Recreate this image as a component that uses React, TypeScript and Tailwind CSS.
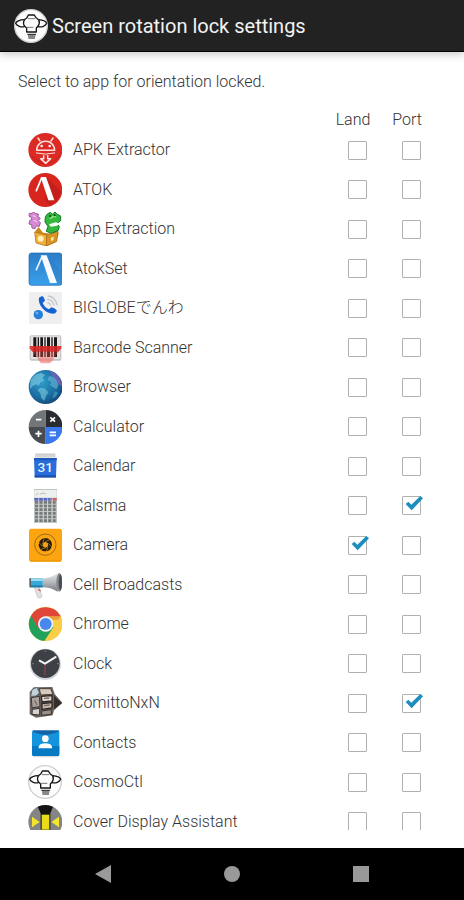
import React, { useState } from 'react';

type Orientation = 'land' | 'port';

interface AppEntry {
  name: string;
  icon: React.ReactNode;
  land?: boolean;
  port?: boolean;
}

// all launcher icons share one 102 unit canvas
const Icon: React.FC<{ children: React.ReactNode }> = ({ children }) => (
  <svg viewBox="0 0 102 102" className="block size-[34px]" aria-hidden="true">
    {children}
  </svg>
);

const CosmoIcon: React.FC = () => (
  <Icon>
    <circle cx="51" cy="51" r="49" fill="#fcfcfc" stroke="#d0d0d0" strokeWidth="4" />
    <g fill="none" stroke="#151515" strokeWidth="4" strokeLinejoin="round">
      <path d="M31 32 L39 26 L43 18 H61 L66 26 L74 32" />
      <path d="M31 32 C17 32 6 38 5 43 C8 50 22 57 32 52" />
      <path d="M74 32 C87 33 96 38 98 43 C95 50 83 57 71 52" />
      <path d="M32 32 Q25 42 32 52 L38 57 V69 H67 V57 L72 52 Q79 42 74 32" />
      <path d="M42 29 H63 M38 55 H58" stroke="#777" strokeWidth="3" />
      <path d="M40 76 H66 M42 81 H64 M43 87 H63" strokeWidth="3" />
    </g>
  </Icon>
);

const ApkExtractorIcon = (
  <Icon>
    <circle cx="52" cy="51" r="51" fill="#dc2b25" />
    <path d="M5 63 A51 51 0 0 0 99 63 L80 82 L52 92 Z" fill="#bf201d" opacity=".5" />
    <g fill="none" stroke="#ffe1df" strokeWidth="4.5" strokeLinecap="round" strokeLinejoin="round">
      <path d="M26 52 C27 16 79 16 80 52 Z" />
      <path d="M36 24 L30 15 M69 24 L75 15" />
      <path d="M25 60 Q52 67 80 60" strokeWidth="3" />
      <path d="M47 68 V77 H38 L53 91 L68 77 H59 V68" />
    </g>
    <circle cx="41" cy="39" r="4" fill="#ffe9e8" />
    <circle cx="65" cy="39" r="4" fill="#ffe9e8" />
  </Icon>
);

const AtokIcon = (
  <Icon>
    <circle cx="52" cy="51" r="51" fill="#d8261f" />
    <path d="M56 14 L98 54 Q94 84 66 97 L50 82 Z" fill="#b71b17" opacity=".6" />
    <path d="M38 12 L54 12 L79 82 L61 82 Z" fill="#fff" />
    <path d="M40 17 L25 53" stroke="#fff" strokeWidth="5" strokeLinecap="round" />
  </Icon>
);

const AppExtractionIcon = (
  <Icon>
    <path d="M4 4 H12 L17 0 L23 5 L31 6 L30 15 L37 19 L31 26 L37 32 L34 43 L25 42 L21 50 L12 48 L11 38 L3 36 L5 26 L12 22 L9 15 L3 13 Z" fill="#d58ad3" stroke="#9e5aa0" strokeWidth="3" />
    <path d="M14 11 L24 14 M17 26 L28 29" stroke="#f0bdf0" strokeWidth="4" />
    <path d="M22 57 L32 45 L45 62 L75 66 L87 49 L92 65 L85 90 L57 102 L24 91 Z" fill="#c8871f" />
    <path d="M20 60 L56 69 L55 102 L24 93 Z" fill="#efaf3a" stroke="#a76a14" strokeWidth="2" />
    <path d="M56 69 L90 58 L86 88 L55 102 Z" fill="#d99626" stroke="#a76a14" strokeWidth="2" />
    <path d="M58 6 L67 1 L73 7 L81 0 L88 7 L98 12 L98 26 L86 35 L94 43 L91 55 L70 64 L55 58 L60 43 L51 30 L52 15 Z" fill="#32b83e" stroke="#187a26" strokeWidth="3" />
    <path d="M63 37 L83 31 L94 34 L88 41 L68 44 Z" fill="#f6fff4" />
    <path d="M65 20 L77 13 L84 15" stroke="#8de981" strokeWidth="4" fill="none" />
    <circle cx="66" cy="12" r="3" fill="#0e4216" />
    <circle cx="80" cy="10" r="3" fill="#0e4216" />
    <circle cx="38" cy="80" r="9" fill="#fff0b5" />
    <path d="M69 77 L77 74 L76 84 L69 87 Z" fill="#fff0b5" />
  </Icon>
);

const AtokSetIcon = (
  <Icon>
    <defs>
      <linearGradient id="atok-set" x1="0" y1="0" x2="0" y2="1">
        <stop offset="0" stopColor="#2b7cc8" />
        <stop offset="1" stopColor="#3aa0ea" />
      </linearGradient>
    </defs>
    <rect x="3" y="3" width="99" height="97" rx="8" fill="url(#atok-set)" stroke="#1d66ad" strokeWidth="2" />
    <path d="M56 12 L100 55 V95 H86 Z" fill="#2a76bb" opacity=".35" />
    <path d="M38 10 L56 10 L87 93 L66 93 Z" fill="#f7fbff" />
    <path d="M41 16 L25 53" stroke="#e4f1fd" strokeWidth="5" strokeLinecap="round" />
  </Icon>
);

const BiglobeIcon = (
  <Icon>
    <rect x="3" y="3" width="99" height="96" rx="4" fill="#efefef" />
    <path d="M33 20 L42 15 Q47 16 51 29 L44 36 Q50 50 63 55 L70 49 Q82 52 87 59 L82 67 Q64 72 46 55 Q29 36 33 20 Z" fill="#1463d2" />
    <g fill="none" stroke="#c3c7cb" strokeWidth="4">
      <path d="M58 35 Q66 36 68 44" />
      <path d="M58 25 Q74 26 78 43" />
      <path d="M59 15 Q82 17 87 42" />
    </g>
    <circle cx="31" cy="71" r="14" fill="#2680d7" />
    <circle cx="27" cy="66" r="4" fill="#6eb5f1" />
  </Icon>
);

const BarcodeIcon = (
  <Icon>
    <rect x="5" y="13" width="95" height="76" rx="5" fill="#c6c6c6" />
    <rect x="9" y="16" width="87" height="68" fill="#e4e4e4" />
    <path d="M16 19 h9 v59 h-9z M29 19 h4 v59 h-4z M37 19 h8 v59 h-8z M49 19 h4 v59 h-4z M57 19 h9 v59 h-9z M70 19 h4 v59 h-4z M78 19 h9 v59 h-9z" fill="#1b1717" />
    <path d="M5 45 H100 V52 L92 62 H13 L5 52 Z" fill="#dc2523" opacity=".88" />
    <path d="M13 62 H92 Q79 78 72 92 H34 Q27 78 13 62 Z" fill="#ec4e47" opacity=".38" />
    <path d="M32 82 H74 L67 97 H38 Z" fill="#ef8c87" opacity=".7" />
  </Icon>
);

const BrowserIcon = (
  <Icon>
    <defs>
      <radialGradient id="globe" cx=".38" cy=".35" r=".7">
        <stop offset="0" stopColor="#2e9ecb" />
        <stop offset=".7" stopColor="#1a699e" />
        <stop offset="1" stopColor="#164776" />
      </radialGradient>
    </defs>
    <circle cx="53" cy="51" r="51" fill="url(#globe)" />
    <path d="M62 1 Q96 8 103 48 L88 42 L75 20 Z" fill="#7862b5" opacity=".8" />
    <path d="M8 30 L22 14 L39 8 L51 15 L43 24 L49 32 L37 37 L32 48 L26 43 L15 47 L6 57 Z" fill="#80c9de" opacity=".65" />
    <path d="M36 53 L50 55 L61 67 L54 77 L49 93 L40 84 L37 70 L29 61 Z" fill="#75c3d9" opacity=".65" />
    <path d="M63 18 L77 21 L87 33 L91 47 L85 58 L75 51 L66 45 L70 36 L59 30 Z" fill="#66b2d1" opacity=".65" />
    <path d="M80 64 L91 68 L82 82 L73 85 Z" fill="#3fa0be" opacity=".7" />
  </Icon>
);

const CalculatorIcon = (
  <Icon>
    <path d="M53 51 V0 A51 51 0 0 0 2 51 Z" fill="#727679" />
    <path d="M53 51 V0 A51 51 0 0 1 104 51 Z" fill="#292d31" />
    <path d="M53 51 V102 A51 51 0 0 1 2 51 Z" fill="#484c50" />
    <path d="M53 51 V102 A51 51 0 0 0 104 51 Z" fill="#3979ed" />
    <g stroke="#fff" strokeWidth="5" fill="none">
      <path d="M24 29 H40 M67 22 L81 35 M81 22 L67 35 M22 71 H41 M31.500 62 V81 M65 67 H84 M65 76 H84" />
    </g>
  </Icon>
);

const CalendarIcon = (
  <Icon>
    <rect x="21" y="13" width="62" height="18" rx="3" fill="#e3e3e3" />
    <path d="M22 21 H82 M24 16 H80" stroke="#bdbdbd" strokeWidth="2" />
    <path d="M18 27 H86 L84 84 H20 Z" fill="#286dd9" />
    <path d="M18 27 H86 V34 H18 Z" fill="#2059bd" />
    <path d="M20 79 H84 V86 H20 Z" fill="#1c4fae" />
    <text x="52" y="70" textAnchor="middle" fontFamily="Roboto, sans-serif" fontSize="41" fontWeight="500" fill="#e7f0ff">31</text>
  </Icon>
);

const CalsmaIcon = (
  <Icon>
    <rect x="18" y="-3" width="69" height="108" fill="#c0c4c3" />
    <rect x="19" y="3" width="67" height="23" fill="#edf1ee" />
    <path d="M24 19 L30 12 M35 16 L44 12 L53 14" stroke="#b6bcb8" strokeWidth="3" fill="none" />
    <g stroke="#767b7c" strokeWidth="8" strokeDasharray="10 3">
      <path d="M21 40 H86 M21 51 H86 M21 62 H86 M21 73 H86 M21 84 H86 M21 95 H86" />
    </g>
    <path d="M19 27 H68 V35 H19 Z" fill="#5b66c4" />
    <path d="M69 27 H86 V35 H69 Z" fill="#d46162" />
    <path d="M32 27 V102 M46 27 V102 M59 27 V102 M73 27 V102" stroke="#d9dcdc" strokeWidth="2" />
  </Icon>
);

const CameraIcon = (
  <Icon>
    <rect x="3" y="2" width="99" height="99" rx="8" fill="#fca510" />
    <path d="M6 99 H99" stroke="#e29207" strokeWidth="3" />
    <circle cx="52" cy="50" r="32" fill="none" stroke="#9c6a13" strokeWidth="3" />
    <circle cx="52" cy="50" r="20" fill="#241b0b" />
    <path d="M52 41 L60 46 V55 L52 60 L44 55 V46 Z" fill="#f0a01b" />
    <path d="M52 41 L66 35 M60 46 L72 57 M60 55 L55 70 M52 60 L38 64 M44 55 L32 43 M44 46 L49 30" stroke="#d49020" strokeWidth="2" />
  </Icon>
);

const CellBroadcastIcon = (
  <Icon>
    <defs>
      <linearGradient id="cone" x1="0" y1="0" x2="0" y2="1">
        <stop offset="0" stopColor="#e8eaec" />
        <stop offset=".5" stopColor="#b4b8bc" />
        <stop offset="1" stopColor="#74797f" />
      </linearGradient>
    </defs>
    <path d="M18 55 H33 L42 86 Q36 93 29 88 Z" fill="#e0e0e0" stroke="#bdbdbd" strokeWidth="2" />
    <path d="M31 64 L38 69" stroke="#d45a5a" strokeWidth="4" />
    <path d="M43 32 Q70 30 89 15 V71 Q68 58 43 58 Z" fill="url(#cone)" />
    <rect x="7" y="31" width="37" height="27" fill="#36a9d8" />
    <path d="M7 32 H44 V39 H7 Z" fill="#9cdaf0" />
    <path d="M7 52 H44 V58 H7 Z" fill="#257ca6" />
    <rect x="4" y="30" width="5" height="28" rx="2" fill="#556168" />
    <ellipse cx="94" cy="43" rx="9" ry="28" fill="#85898d" />
    <ellipse cx="97" cy="43" rx="5" ry="24" fill="#494d51" />
  </Icon>
);

const ChromeIcon = (
  <Icon>
    <circle cx="53" cy="51" r="51" fill="#f9cd45" />
    <path d="M53 51 L9 26 A51 51 0 0 0 49 102 L76 61 Z" fill="#22a15b" />
    <path d="M9 26 A51 51 0 0 1 98 28 H53 L31 64 Z" fill="#df4638" />
    <path d="M53 28 H98 L91 38 H72 Z" fill="#d34b31" opacity=".35" />
    <circle cx="53" cy="51" r="23" fill="#f2f5f6" />
    <circle cx="53" cy="51" r="18" fill="#4787ee" />
  </Icon>
);

const ClockIcon = (
  <Icon>
    <circle cx="52" cy="52" r="47" fill="#d4d8dd" />
    <circle cx="52" cy="50" r="43" fill="#3d4146" />
    <path d="M51 50 V84" stroke="#a9403c" strokeWidth="3" />
    <path d="M33 40 L51 50 L85 29" stroke="#f4f4f4" strokeWidth="6" fill="none" strokeLinejoin="round" />
    <path d="M52 11 V15 M91 50 H87 M13 50 H17" stroke="#8a8f94" strokeWidth="3" />
  </Icon>
);

const ComittoIcon = (
  <Icon>
    <path d="M5 18 L17 4 L73 3 L80 24 L103 51 L78 73 L74 88 L24 95 L5 85 Z" fill="#6b625e" />
    <path d="M12 11 L27 4 L34 20 L24 30 L8 31 Z" fill="#c4d1d6" stroke="#5d7482" strokeWidth="3" />
    <path d="M34 8 L68 8 L75 25 L38 27 Z" fill="#d9c9bd" stroke="#4a413d" strokeWidth="3" />
    <path d="M10 35 L34 31 L36 62 L12 65 Z" fill="#aaa09c" stroke="#3f3936" strokeWidth="3" />
    <path d="M40 31 L72 29 V45 L42 48 Z" fill="#e1d9d3" stroke="#2c2725" strokeWidth="4" />
    <path d="M42 53 L72 50 V66 L42 70 Z" fill="#c8b9ae" stroke="#2c2725" strokeWidth="4" />
    <path d="M13 70 L35 67 V87 L12 85 Z" fill="#d7d2cf" stroke="#393330" strokeWidth="3" />
    <path d="M41 75 L70 71 V85 L41 88 Z" fill="#9b918b" stroke="#393330" strokeWidth="3" />
    <path d="M78 29 L102 51 L78 70 Z" fill="#332d2b" />
    <path d="M48 37 L64 36 M48 59 L65 57 M20 43 L27 58" stroke="#7a6c63" strokeWidth="4" />
  </Icon>
);

const ContactsIcon = (
  <Icon>
    <path d="M14 13 H93 L90 28 H16 Z" fill="#1264a8" />
    <path d="M12 15 Q52 38 94 15 V83 H12 Z" fill="#1593dc" />
    <path d="M12 60 H94 V86 Q94 90 90 90 H16 Q12 90 12 86 Z" fill="#0879c3" />
    <path d="M16 92 H91" stroke="#d0d4d7" strokeWidth="3" />
    <circle cx="52" cy="38" r="10" fill="#fff" />
    <path d="M32 67 V62 Q36 52 52 52 Q68 52 72 62 V67 Z" fill="#fff" />
  </Icon>
);

const CoverDisplayIcon = (
  <Icon>
    <circle cx="52" cy="51" r="51" fill="#858585" />
    <path d="M29 5 Q52 -5 75 5 L67 25 V98 H38 V25 Z" fill="#141414" />
    <path d="M41 29 H64 V102 H41 Z" fill="#e9dd19" />
    <path d="M41 74 H64" stroke="#aba10c" strokeWidth="4" />
    <path d="M12 35 L35 51 L12 67 Z" fill="#f3e52b" />
    <path d="M93 35 L70 51 L93 67 Z" fill="#f3e52b" />
  </Icon>
);

const initialApps: AppEntry[] = [
  { name: 'APK Extractor', icon: ApkExtractorIcon },
  { name: 'ATOK', icon: AtokIcon },
  { name: 'App Extraction', icon: AppExtractionIcon },
  { name: 'AtokSet', icon: AtokSetIcon },
  { name: 'BIGLOBEでんわ', icon: BiglobeIcon },
  { name: 'Barcode Scanner', icon: BarcodeIcon },
  { name: 'Browser', icon: BrowserIcon },
  { name: 'Calculator', icon: CalculatorIcon },
  { name: 'Calendar', icon: CalendarIcon },
  { name: 'Calsma', icon: CalsmaIcon, port: true },
  { name: 'Camera', icon: CameraIcon, land: true },
  { name: 'Cell Broadcasts', icon: CellBroadcastIcon },
  { name: 'Chrome', icon: ChromeIcon },
  { name: 'Clock', icon: ClockIcon },
  { name: 'ComittoNxN', icon: ComittoIcon, port: true },
  { name: 'Contacts', icon: ContactsIcon },
  { name: 'CosmoCtl', icon: <CosmoIcon /> },
  { name: 'Cover Display Assistant', icon: CoverDisplayIcon },
];

interface LockCheckboxProps {
  label: string;
  checked: boolean;
  onChange: () => void;
}

const LockCheckbox: React.FC<LockCheckboxProps> = ({ label, checked, onChange }) => (
  <label className="relative mx-auto block size-[19px] cursor-pointer">
    <input
      type="checkbox"
      aria-label={label}
      checked={checked}
      onChange={onChange}
      className="block size-[19px] appearance-none rounded-[1px] border border-[#b0b0b0] bg-white"
    />
    {checked && (
      <svg viewBox="0 0 66 57" className="pointer-events-none absolute top-0 left-0 h-[19px] w-[22px]" aria-hidden="true">
        <path d="M11 24 L19 17 L28 26 L55 0 L63 7 L29 43 Z" fill="#1c8dbd" />
      </svg>
    )}
  </label>
);

const App: React.FC = () => {
  const [apps, setApps] = useState<AppEntry[]>(initialApps);

  const toggle = (index: number, key: Orientation) => {
    setApps((prev) => prev.map((app, i) => (i === index ? { ...app, [key]: !app[key] } : app)));
  };

  return (
    <div className="flex h-screen flex-col bg-white font-[Roboto,'Noto_Sans_CJK_JP',sans-serif] text-base font-light text-[#333]">
      <header className="flex h-[52px] shrink-0 items-center gap-1 bg-[#222] pl-[14px] shadow-[inset_0_-1px_0_#000,0_3px_8px_rgba(0,0,0,0.2)]">
        <CosmoIcon />
        <h1 className="text-xl font-normal text-[#f2f2f2]">Screen rotation lock settings</h1>
      </header>

      <main className="flex min-h-0 flex-1 flex-col pb-[18px]">
        <p className="px-[18px] pt-5 leading-5">Select to app for orientation locked.</p>

        <div className="mt-[18px] min-h-0 flex-1 overflow-y-auto [scrollbar-width:none]">
          <table className="w-full table-fixed border-collapse">
            <colgroup>
              <col className="w-[73px]" />
              <col />
              <col className="w-[54px]" />
              <col className="w-[54px]" />
              <col className="w-[26px]" />
            </colgroup>
            <thead>
              <tr className="h-5 leading-5">
                <td colSpan={2} />
                <th scope="col" className="pr-2 font-light">Land</th>
                <th scope="col" className="pr-2 font-light">Port</th>
                <td />
              </tr>
            </thead>
            <tbody>
              {apps.map((app, index) => (
                <tr key={app.name} className="odd:h-10 even:h-[39px]">
                  <td className="pl-7">{app.icon}</td>
                  <th scope="row" className="text-left leading-5 font-light whitespace-nowrap">{app.name}</th>
                  <td>
                    <LockCheckbox label={`${app.name} Land`} checked={!!app.land} onChange={() => toggle(index, 'land')} />
                  </td>
                  <td>
                    <LockCheckbox label={`${app.name} Port`} checked={!!app.port} onChange={() => toggle(index, 'port')} />
                  </td>
                  <td />
                </tr>
              ))}
            </tbody>
          </table>
        </div>
      </main>

      {/* system navigation */}
      <nav className="flex h-[52px] shrink-0 items-center justify-around bg-black px-[38px]">
        <button type="button" aria-label="Back">
          <svg viewBox="0 0 20 20" className="size-5" fill="#999">
            <path d="M2 10 L18 1 V19 Z" />
          </svg>
        </button>
        <button type="button" aria-label="Home">
          <svg viewBox="0 0 20 20" className="size-5" fill="#999">
            <circle cx="10" cy="10" r="8" />
          </svg>
        </button>
        <button type="button" aria-label="Recent apps">
          <svg viewBox="0 0 20 20" className="size-5" fill="#999">
            <rect x="2" y="2" width="16" height="16" />
          </svg>
        </button>
      </nav>
    </div>
  );
};

export default App;
